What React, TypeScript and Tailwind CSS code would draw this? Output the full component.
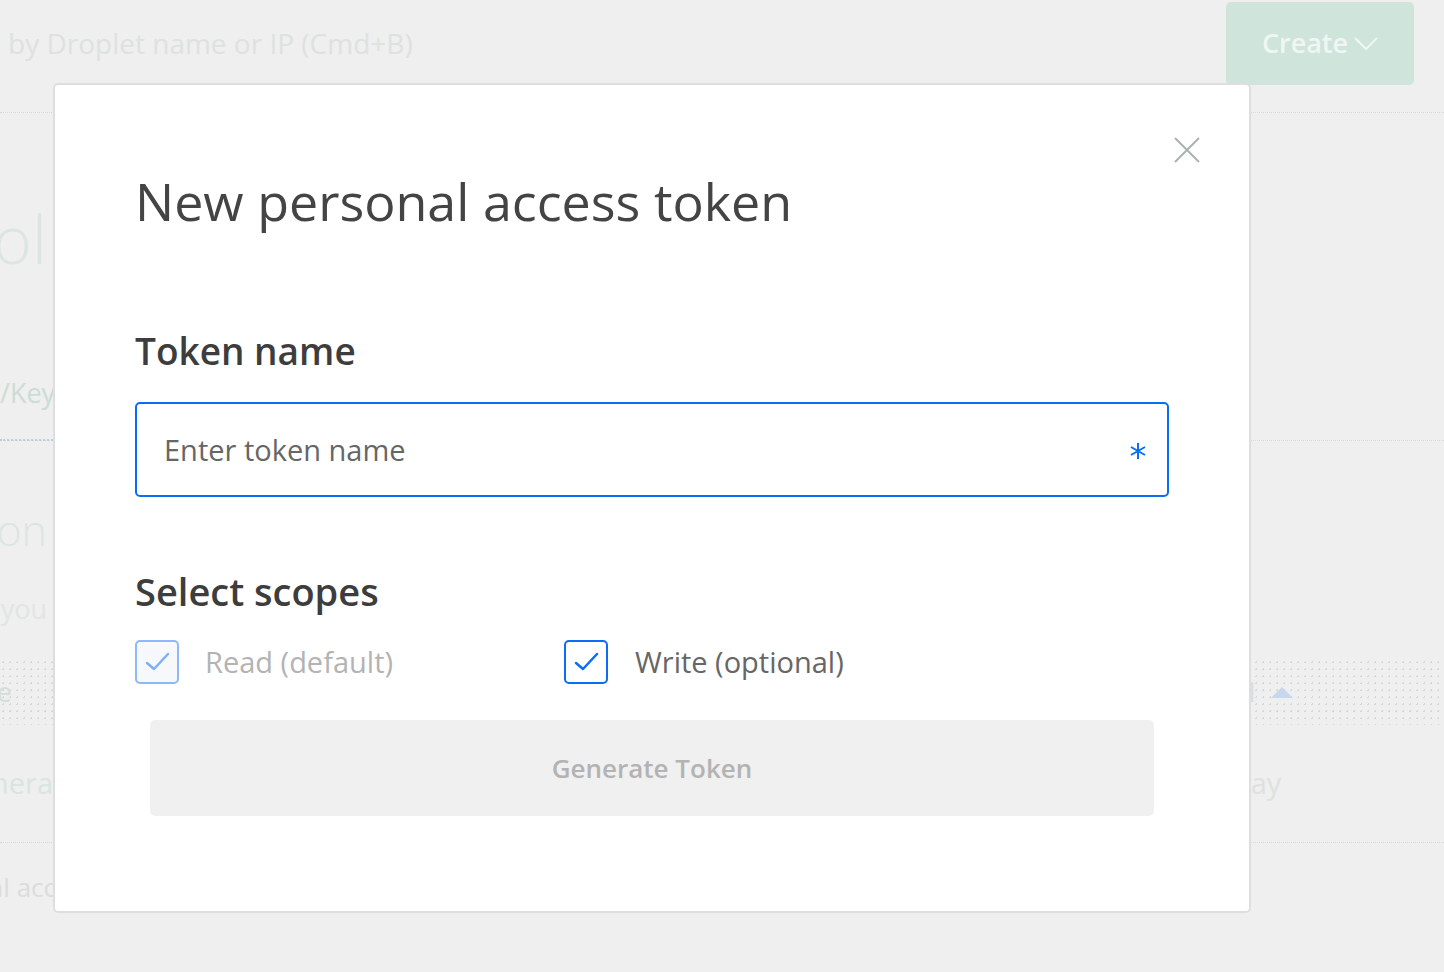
import React from "react";

const font = { fontFamily: "'Open Sans', Lato, sans-serif" };

function Check({ color }: { color: string }) {
  return (
    <svg width="40" height="40" viewBox="0 0 40 40" fill="none">
      <polyline points="10,21 17,27 31,12" stroke={color} strokeWidth="2.5" strokeLinecap="round" strokeLinejoin="round" />
    </svg>
  );
}

function Row({ h, w = "w-[47px]", children }: { h: string; w?: string; children: React.ReactNode }) {
  return (
    <div className={`flex ${h}`}>
      <div className={`${w} overflow-hidden flex justify-end whitespace-nowrap`}>{children}</div>
    </div>
  );
}

function Background() {
  return (
    <div className="flex flex-col text-[#dde3e0]">
      <div className="flex items-start justify-between h-[113px] border-b border-dotted border-[#d9d9d9] pr-[30px]">
        <div className="pl-[8px] pt-[22px] text-[28px] text-[#dde2df]">by Droplet name or IP (Cmd+B)</div>
        <div className="mt-[2px] w-[188px] h-[83px] rounded-[5px] bg-[#cfe4db] flex items-center justify-center gap-[6px] text-[27px] font-semibold text-[#f0f6f3]">
          Create
          <svg width="24" height="14" viewBox="0 0 24 14" fill="none">
            <polyline points="1,1 12,12 23,1" stroke="#f0f6f3" strokeWidth="2" />
          </svg>
        </div>
      </div>

      <div className="h-[92px]" />
      <Row h="h-[70px]">
        <span className="text-[66px] font-light leading-none text-[#dce5e1]">Control</span>
      </Row>
      <div className="h-[98px]" />
      <div className="flex h-[68px] border-b border-dotted border-[#d9d9d9]">
        <div className="w-[53px] overflow-hidden flex justify-end border-b-2 border-dotted border-[#b9cbe6] -mb-[1px]">
          <span className="whitespace-nowrap text-[27px] leading-[40px] text-[#cddcd5] -mr-[15px]">Tokens/Keys</span>
        </div>
      </div>
      <div className="h-[66px]" />
      <Row h="h-[46px]">
        <span className="text-[43px] font-light leading-[46px] text-[#dce5e1]">Option</span>
      </Row>
      <div className="h-[38px]" />
      <Row h="h-[36px]">
        <span className="text-[27px] leading-[36px] text-[#e1e5e3]">Tokens you</span>
      </Row>
      <div className="h-[32px]" />
      <div className="flex h-[66px] items-center bg-[radial-gradient(#d6d6d6_1px,transparent_1px)] bg-[size:7px_7px]">
        <div className="w-[12px] overflow-hidden flex justify-end">
          <span className="whitespace-nowrap text-[27px] text-[#d6ded9]">Name</span>
        </div>
        <div className="w-[1226px]" />
        <div className="flex items-center gap-[16px]">
          <span className="text-[27px] font-bold text-[#d3e2dc]">d</span>
          <svg width="22" height="11" viewBox="0 0 22 11">
            <polygon points="11,0 22,11 0,11" fill="#c8d8ec" />
          </svg>
        </div>
      </div>
      <div className="h-[38px]" />
      <div className="flex h-[40px] items-center">
        <div className="w-[53px] overflow-hidden flex justify-end">
          <span className="whitespace-nowrap text-[29px] text-[#d9e5e0]">Genera</span>
        </div>
        <div className="w-[1180px]" />
        <span className="text-[29px] text-[#dde2df]">day</span>
      </div>
      <div className="h-[40px] border-b border-dotted border-[#d9d9d9]" />
      <div className="h-[26px]" />
      <Row h="h-[36px]" w="w-[56px]">
        <span className="text-[26px] leading-[36px] text-[#dcdcdc]">Personal acc</span>
      </Row>
    </div>
  );
}

function Modal() {
  return (
    <div className="absolute left-[53px] top-[83px] w-[1198px] h-[830px] bg-white border-2 border-[#dedede] rounded-[5px]">
      <button className="absolute top-[52px] right-[49px]">
        <svg width="26" height="26" viewBox="0 0 26 26" fill="none">
          <path d="M1 1L25 25M25 1L1 25" stroke="#a9b4b0" strokeWidth="2" />
        </svg>
      </button>
      <div className="flex flex-col px-[80px] pt-[84px]">
        <h1 className="text-[52px] leading-[64px] text-[#444]">New personal access token</h1>
        <h2 className="mt-[96px] text-[37px] leading-[44px] font-semibold text-[#3d3d3d]">Token name</h2>
        <div className="mt-[29px] h-[95px] border-2 border-[#0b6cf6] rounded-[5px] flex items-center justify-between pl-[27px] pr-[21px]">
          <span className="text-[29px] text-[#666]">Enter token name</span>
          <svg width="16" height="18" viewBox="0 0 16 18" fill="none" className="mt-[2px]">
            <path d="M8 1V17M1 5L15 13M15 5L1 13" stroke="#0b6cf6" strokeWidth="2" />
          </svg>
        </div>
        <h2 className="mt-[72px] text-[38px] leading-[44px] font-semibold text-[#3d3d3d]">Select scopes</h2>
        <div className="mt-[27px] flex items-center">
          <div className="w-[429px] flex items-center gap-[26px]">
            <div className="w-[44px] h-[44px] rounded-[5px] border-2 border-[#8db9fa] bg-[#f6f8fb] flex items-center justify-center">
              <Check color="#7fb0f7" />
            </div>
            <span className="text-[29px] text-[#b3b3b3]">Read (default)</span>
          </div>
          <div className="flex items-center gap-[27px]">
            <div className="w-[44px] h-[44px] rounded-[5px] border-2 border-[#0b6cf6] flex items-center justify-center">
              <Check color="#0b6cf6" />
            </div>
            <span className="text-[29px] text-[#666]">Write (optional)</span>
          </div>
        </div>
        <div className="mt-[36px] mx-[15px] h-[96px] rounded-[5px] bg-[#f0f0f0] flex items-center justify-center">
          <span className="text-[26px] font-semibold text-[#b3b3b3]">Generate Token</span>
        </div>
      </div>
    </div>
  );
}

export default function App() {
  return (
    <div className="relative w-[1444px] h-[972px] overflow-hidden bg-[#efefef]" style={font}>
      <Background />
      <Modal />
    </div>
  );
}
